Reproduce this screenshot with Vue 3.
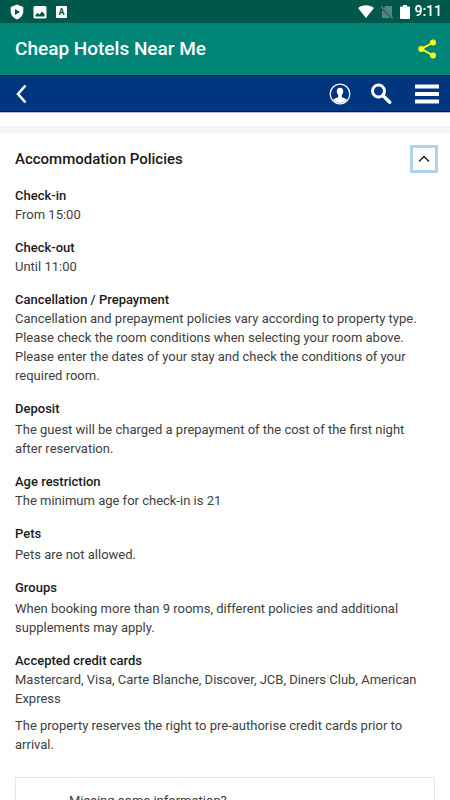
<script setup>
import { ref } from 'vue'

const open = ref(true)

const policies = [
  { title: 'Check-in', text: ['From 15:00'] },
  { title: 'Check-out', text: ['Until 11:00'] },
  {
    title: 'Cancellation / Prepayment',
    text: [
      'Cancellation and prepayment policies vary according to property type. Please check the room conditions when selecting your room above. Please enter the dates of your stay and check the conditions of your required room.',
    ],
  },
  {
    title: 'Deposit',
    spaced: true,
    text: ['The guest will be charged a prepayment of the cost of the first night after reservation.'],
  },
  { title: 'Age restriction', text: ['The minimum age for check-in is 21'] },
  { title: 'Pets', spaced: true, text: ['Pets are not allowed.'] },
  {
    title: 'Groups',
    spaced: true,
    text: ['When booking more than 9 rooms, different policies and additional supplements may apply.'],
  },
  {
    title: 'Accepted credit cards',
    text: [
      'Mastercard, Visa, Carte Blanche, Discover, JCB, Diners Club, American Express',
      'The property reserves the right to pre-authorise credit cards prior to arrival.',
    ],
  },
]
</script>

<template>
  <div class="page">
    <div class="status">
      <div class="status-left">
        <svg width="14" height="16" viewBox="0 0 14 16" aria-hidden="true">
          <path fill="#fff" d="M7 0.500 13.300 3v5C13 11.500 10.500 14 7 15.500 3.500 14 1 11.500 0.700 8V3z" />
          <path fill="#00574b" d="M5 5 10 8 5 11z" />
        </svg>
        <svg width="14" height="14" viewBox="0 0 14 14" aria-hidden="true">
          <rect x="0.500" y="1" width="13" height="12.500" rx="1.500" fill="#fff" />
          <path fill="#00574b" d="M2.500 11.500V10l2-2 2 1.500 2.500-3 2.500 2.500v2.500z" />
        </svg>
        <div class="letter-badge">A</div>
      </div>
      <div class="status-right">
        <svg width="16" height="13" viewBox="0 0 16 13" aria-hidden="true">
          <path fill="#fff" d="M8 13 0 3C4.500-0.700 11.500-0.700 16 3z" />
        </svg>
        <svg class="sim" width="12" height="14" viewBox="0 0 12 14" aria-hidden="true">
          <path fill="#56877f" d="M4.500 1H11v10.500L2.700 3zM1 4.500 9.500 13H1z" />
          <path stroke="#56877f" stroke-width="1.300" d="M0.300 1.500 11.700 13.300" />
        </svg>
        <svg width="10" height="14" viewBox="0 0 10 14" aria-hidden="true">
          <path fill="#fff" d="M3 0h4v1.500h2q1 0 1 1V13q0 1-1 1H1q-1 0-1-1V2.500q0-1 1-1h2z" />
        </svg>
        <span class="time">9:11</span>
      </div>
    </div>

    <header class="app-bar">
      <h1>Cheap Hotels Near Me</h1>
      <button type="button" class="icon-button" aria-label="Share">
        <svg width="18" height="20" viewBox="0 0 18 20" aria-hidden="true">
          <path d="M15 3.500 3.500 10 15 16.500" fill="none" stroke="#ffff1e" stroke-width="2" />
          <g fill="#ffff1e">
            <circle cx="15" cy="3.500" r="3" />
            <circle cx="3.300" cy="10" r="3" />
            <circle cx="15" cy="16.500" r="3" />
          </g>
        </svg>
      </button>
    </header>

    <nav class="nav-bar">
      <button type="button" class="icon-button" aria-label="Back">
        <svg width="12" height="20" viewBox="0 0 12 20" aria-hidden="true">
          <path d="M10.500 1.500 3 10 10.500 18.500" fill="none" stroke="#fff" stroke-width="2.600" />
        </svg>
      </button>
      <div class="nav-actions">
        <button type="button" class="icon-button" aria-label="Account">
          <svg width="22" height="22" viewBox="0 0 22 22" aria-hidden="true">
            <circle cx="11" cy="11" r="9.800" fill="none" stroke="#fff" stroke-width="1.300" />
            <path
              fill="#fff"
              d="M11 4.800c2.300 0 3.300 1.500 3.200 3.700-.1 1.700-.7 2.600-1.400 3.400v1.800c.3 1.200 3.700 1.300 5.200 3.100A9.300 9.300 0 0 1 4 16.800c1.500-1.800 4.900-1.900 5.200-3.100v-1.800c-.7-.8-1.300-1.700-1.400-3.400-.1-2.200.9-3.700 3.200-3.700z"
            />
          </svg>
        </button>
        <button type="button" class="icon-button" aria-label="Search">
          <svg width="22" height="22" viewBox="0 0 22 22" aria-hidden="true">
            <circle cx="8.500" cy="8" r="6" fill="none" stroke="#fff" stroke-width="3" />
            <path d="M12.700 12.200 19.700 19.200" stroke="#fff" stroke-width="3.400" stroke-linecap="round" />
          </svg>
        </button>
        <button type="button" class="icon-button menu" aria-label="Menu">
          <svg width="24" height="20" viewBox="0 0 24 20" aria-hidden="true">
            <g fill="#fff">
              <rect y="0.500" width="24" height="4" rx="0.500" />
              <rect y="8" width="24" height="4" rx="0.500" />
              <rect y="15.500" width="24" height="4" rx="0.500" />
            </g>
          </svg>
        </button>
      </div>
    </nav>

    <main class="content">
      <div class="section-head">
        <h2>Accommodation Policies</h2>
        <button
          type="button"
          class="toggle"
          aria-label="Accommodation Policies"
          :aria-expanded="open"
          @click="open = !open"
        >
          <svg width="12" height="8" viewBox="0 0 12 8" aria-hidden="true">
            <path d="M1 6.500 6 1.500 11 6.500" fill="none" stroke="#222" stroke-width="1.500" />
          </svg>
        </button>
      </div>

      <div v-show="open" class="policies">
        <section v-for="policy in policies" :key="policy.title" :class="{ spaced: policy.spaced }">
          <h3>{{ policy.title }}</h3>
          <p v-for="line in policy.text" :key="line">{{ line }}</p>
        </section>
      </div>

      <aside class="notice">Missing some information?</aside>
    </main>
  </div>
</template>

<style>
body {
  background: #fff;
  overflow-x: hidden;
}
</style>

<style scoped>
.page {
  font-family: Roboto, "Liberation Sans", sans-serif;
  font-size: 13px;
  line-height: 19px;
  color: #404040;
}

h1,
h2,
h3,
p {
  margin: 0;
}

svg {
  display: block;
}

.status {
  display: flex;
  align-items: center;
  justify-content: space-between;
  height: 23px;
  padding: 0 8px 0 10px;
  background: #00574b;
}

.status-left {
  display: flex;
  align-items: center;
  gap: 9px;
}

.letter-badge {
  width: 11px;
  height: 12px;
  border-radius: 1px;
  background: #fff;
  color: #00574b;
  font-size: 9px;
  font-weight: 700;
  line-height: 12px;
  text-align: center;
}

.status-right {
  display: flex;
  align-items: center;
  gap: 4px;
}

.sim {
  margin: 0 3px;
}

.time {
  color: #fff;
  font-size: 14px;
  font-weight: 500;
}

.app-bar {
  display: flex;
  align-items: center;
  justify-content: space-between;
  height: 52px;
  padding: 0 14px 0 15px;
  background: #008577;
}

.app-bar h1 {
  color: #fff;
  font-size: 19px;
  font-weight: 500;
  line-height: 24px;
}

.icon-button {
  padding: 0;
  border: 0;
  background: none;
  cursor: pointer;
}

.nav-bar {
  display: flex;
  align-items: center;
  justify-content: space-between;
  height: 35px;
  padding: 0 11px 0 15px;
  border-top: 1px solid #00276b;
  border-bottom: 1px solid #00146b;
  background: #003580;
  box-shadow: 0 1px 0 #b9b9d6;
}

.nav-actions {
  display: flex;
  align-items: center;
  gap: 19px;
}

.menu {
  margin-left: 4px;
}

.content {
  margin-top: 14px;
  padding: 12px 12px 0 15px;
  border-top: 7px solid #f4f4f4;
}

.section-head {
  display: flex;
  align-items: center;
  justify-content: space-between;
}

.section-head h2 {
  color: #1a1a1a;
  font-size: 15px;
  font-weight: 500;
}

.toggle {
  display: grid;
  place-items: center;
  width: 28px;
  height: 28px;
  padding: 0;
  border: 3px solid #aed3ee;
  background: #fff;
  cursor: pointer;
}

.policies {
  display: flex;
  flex-direction: column;
  gap: 14px;
  margin-top: 13px;
  padding-right: 8px;
}

.policies h3 {
  color: #1a1a1a;
  font-size: 13px;
  font-weight: 500;
}

.spaced h3 {
  margin-bottom: 2px;
}

.policies p + p {
  margin-top: 8px;
}

.notice {
  margin: 23px 3px 0 0;
  padding: 13px 53px;
  border: 1px solid #e6e6e6;
}
</style>
